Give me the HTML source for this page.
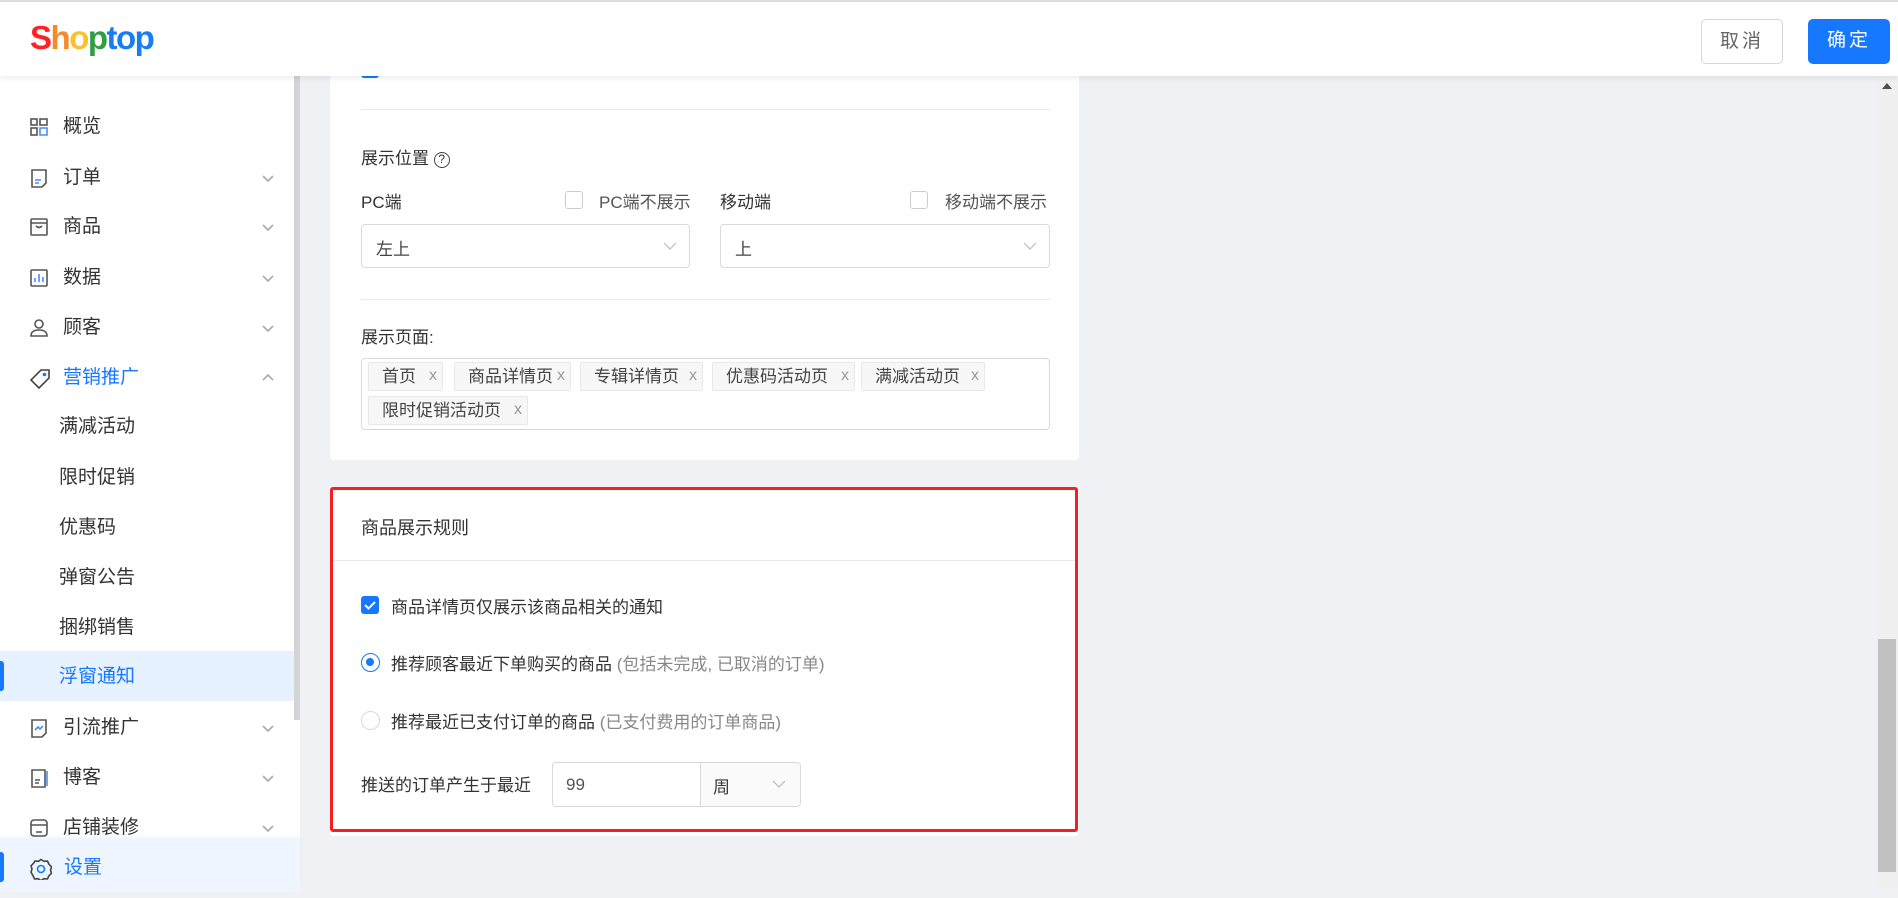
<!DOCTYPE html>
<html><head><meta charset="utf-8"><style>
*{box-sizing:border-box;margin:0;padding:0}
body{width:1898px;height:892px;overflow:hidden;background:#f0f1f5;font-family:"Liberation Sans","Noto Sans CJK SC",sans-serif;color:#333;position:relative}
.abs{position:absolute}
.hdr{left:0;top:0;width:1898px;height:76px;background:#fff;border-top:2px solid #ddd;box-shadow:0 2px 6px rgba(0,0,0,.08);z-index:5}
.logo{left:30px;top:17px;font-size:33px;font-weight:bold;letter-spacing:-1.5px;font-family:"Liberation Sans",sans-serif}
.btn{top:17px;height:45px;width:82px;border-radius:5px;font-size:19px;text-align:center;line-height:43px;letter-spacing:3px}
.side{left:0;top:76px;width:300px;height:816px;background:#fff}
.mi{position:absolute;left:0;width:294px;height:48px;font-size:19px;line-height:48px}
.mi .t{position:absolute;left:63px}
.mi .s{position:absolute;left:59px}
.mi svg.ic{position:absolute;left:30px;top:15px}
.chev{position:absolute;left:261px;top:14px}
.card{background:#fff;border-radius:4px;left:330px;width:749px}
.f{font-size:17px;color:#333}
.line{height:1px;background:#e8e8e8;left:361px;width:689px}
.cb{width:18px;height:18px;border:1px solid #ccc;border-radius:3px;background:#fff}
.sel{height:44px;border:1px solid #d9d9d9;border-radius:4px;background:#fff}
.tag{position:absolute;height:29px;background:#f7f7f7;border:1px solid #e8e8e8;border-radius:2px;font-size:17px;line-height:27px;padding-left:13px;color:#444}
.tag i{font-style:normal;color:#999;font-size:16px;position:absolute;right:5px;top:-1px}
</style></head><body>
<div class="abs hdr">
 <div class="abs logo"><span style="color:#f22">S</span><span style="color:#f58a2a">h</span><span style="color:#fbc02d">o</span><span style="color:#2e9e44">p</span><span style="color:#1a7cf5">top</span></div>
 <div class="abs btn" style="left:1701px;border:1px solid #d6d6d6;color:#666;background:#fff">取消</div>
 <div class="abs btn" style="left:1808px;background:#1677ff;color:#fff">确定</div>
</div>
<div class="abs side">
 <div class="abs" style="left:294px;top:0;width:6px;height:644px;background:#d4d4d4"></div>
</div>
<div class="abs" style="left:0;top:76px;width:300px;height:816px">
 <div class="mi" style="top:27px"><svg class="ic" width="18" height="18" viewBox="0 0 18 18" fill="none" stroke="#555" stroke-width="1.6"><rect x="1" y="1" width="6" height="6"/><rect x="1" y="10" width="6" height="7"/><rect x="10" y="1" width="7" height="6"/><path d="M10 10h7v7h-7z" stroke="#4a8cf7"/></svg><span class="t">概览</span></div>
 <div class="mi" style="top:78px"><svg class="ic" width="18" height="19" viewBox="0 0 18 19" fill="none" stroke="#555" stroke-width="1.6"><path d="M2 1h14v13l-4 4H2z"/><path d="M5 11h6M5 14h4" stroke="#4a8cf7"/></svg><span class="t">订单</span><svg class="chev" width="14" height="20" viewBox="0 0 14 20"><path d="M2 8l5 5 5-5" fill="none" stroke="#aaa" stroke-width="1.6"/></svg></div>
 <div class="mi" style="top:127px"><svg class="ic" width="18" height="18" viewBox="0 0 18 18" fill="none" stroke="#555" stroke-width="1.6"><rect x="1" y="1" width="16" height="16" rx="1"/><path d="M1 5h16M6 8q3 3 6 0" /></svg><span class="t">商品</span><svg class="chev" width="14" height="20" viewBox="0 0 14 20"><path d="M2 8l5 5 5-5" fill="none" stroke="#aaa" stroke-width="1.6"/></svg></div>
 <div class="mi" style="top:178px"><svg class="ic" width="18" height="18" viewBox="0 0 18 18" fill="none" stroke="#555" stroke-width="1.6"><rect x="1" y="1" width="16" height="16" rx="1"/><path d="M5 13V9M9 13V5M13 13V8" stroke="#4a8cf7"/></svg><span class="t">数据</span><svg class="chev" width="14" height="20" viewBox="0 0 14 20"><path d="M2 8l5 5 5-5" fill="none" stroke="#aaa" stroke-width="1.6"/></svg></div>
 <div class="mi" style="top:228px"><svg class="ic" width="18" height="18" viewBox="0 0 18 18" fill="none" stroke="#555" stroke-width="1.6"><circle cx="9" cy="5" r="4"/><path d="M1 17q0-6 8-6t8 6z"/></svg><span class="t">顾客</span><svg class="chev" width="14" height="20" viewBox="0 0 14 20"><path d="M2 8l5 5 5-5" fill="none" stroke="#aaa" stroke-width="1.6"/></svg></div>
 <div class="mi" style="top:278px;color:#1677ff"><svg class="ic" width="20" height="20" viewBox="0 0 20 20" fill="none" stroke="#444" stroke-width="1.6"><path d="M11 1h8v8L9 19 1 11z"/><circle cx="14.5" cy="5.5" r="1" fill="#1677ff" stroke="#1677ff"/></svg><span class="t">营销推广</span><svg class="chev" width="14" height="20" viewBox="0 0 14 20"><path d="M2 12l5-5 5 5" fill="none" stroke="#aaa" stroke-width="1.6"/></svg></div>
 <div class="mi" style="top:327px"><span class="s">满减活动</span></div>
 <div class="mi" style="top:378px"><span class="s">限时促销</span></div>
 <div class="mi" style="top:428px"><span class="s">优惠码</span></div>
 <div class="mi" style="top:478px"><span class="s">弹窗公告</span></div>
 <div class="mi" style="top:528px"><span class="s">捆绑销售</span></div>
 <div class="mi" style="top:575px;height:50px;line-height:52px;background:#e6f2ff;color:#1677ff"><div class="abs" style="left:0;top:10px;width:4px;height:30px;background:#1677ff;border-radius:0 3px 3px 0"></div><span class="s">浮窗通知</span></div>
 <div class="mi" style="top:628px"><svg class="ic" width="18" height="19" viewBox="0 0 18 19" fill="none" stroke="#555" stroke-width="1.6"><path d="M2 1h14v13l-4 4H2z"/><path d="M5 11l3-3 2 2 3-3" stroke="#4a8cf7"/></svg><span class="t">引流推广</span><svg class="chev" width="14" height="20" viewBox="0 0 14 20"><path d="M2 8l5 5 5-5" fill="none" stroke="#aaa" stroke-width="1.6"/></svg></div>
 <div class="mi" style="top:678px"><svg class="ic" width="18" height="19" viewBox="0 0 18 19" fill="none" stroke="#555" stroke-width="1.6"><path d="M2 1h13v17H2z"/><path d="M5 11h5M5 14h4" /><path d="M17 2v15" stroke="#4a8cf7"/></svg><span class="t">博客</span><svg class="chev" width="14" height="20" viewBox="0 0 14 20"><path d="M2 8l5 5 5-5" fill="none" stroke="#aaa" stroke-width="1.6"/></svg></div>
 <div class="mi" style="top:728px"><svg class="ic" width="18" height="18" viewBox="0 0 18 18" fill="none" stroke="#555" stroke-width="1.6"><rect x="1" y="1" width="16" height="16" rx="3"/><path d="M1 6h16M6 13h6" /></svg><span class="t">店铺装修</span><svg class="chev" width="14" height="20" viewBox="0 0 14 20"><path d="M2 8l5 5 5-5" fill="none" stroke="#aaa" stroke-width="1.6"/></svg></div>
 <div class="abs" style="left:0;top:762px;width:300px;height:54px;background:#eef5ff;box-shadow:0 -2px 4px rgba(0,0,0,.04);font-size:19px;line-height:60px;color:#1677ff">
  <div class="abs" style="left:0;top:14px;width:4px;height:30px;background:#1677ff;border-radius:0 3px 3px 0"></div>
  <svg class="abs" style="left:30px;top:20px" width="22" height="22" viewBox="0 0 22 22" fill="none" stroke="#444" stroke-width="1.6"><path d="M11 1.5l3 1.8 3.5-.2 1.5 3.2 2.5 2.5-1 3.2 1 3.2-2.5 2.5-1.5 3.2-3.5-.2-3 1.8-3-1.8-3.5.2-1.5-3.2L1 14.2l1-3.2-1-3.2 2.5-2.5L5 3.1l3.5.2z"/><circle cx="11" cy="11" r="3.5" stroke="#1677ff"/></svg>
  <span class="abs" style="left:64px">设置</span>
 </div>
</div>
<!-- card 1 -->
<div class="abs card" style="top:40px;height:420px"></div>
<div class="abs" style="left:361px;top:64px;width:18px;height:14px;background:#1677ff;border-radius:3px"></div>
<div class="abs line" style="top:109px"></div>
<div class="abs f" style="left:361px;top:144px">展示位置 <span style="display:inline-block;width:16px;height:16px;border:1.5px solid #444;border-radius:50%;font-size:12px;line-height:13px;text-align:center;vertical-align:1px">?</span></div>
<div class="abs f" style="left:361px;top:188px">PC端</div>
<div class="abs cb" style="left:565px;top:191px"></div>
<div class="abs f" style="left:599px;top:188px;color:#555">PC端不展示</div>
<div class="abs f" style="left:720px;top:188px">移动端</div>
<div class="abs cb" style="left:910px;top:191px"></div>
<div class="abs f" style="left:945px;top:188px;color:#555">移动端不展示</div>
<div class="abs sel" style="left:361px;top:224px;width:329px"><span class="abs f" style="left:14px;top:10px;color:#444">左上</span><svg class="abs" style="right:12px;top:15px" width="14" height="12"><path d="M1 3l6 6 6-6" fill="none" stroke="#bbb" stroke-width="1.2"/></svg></div>
<div class="abs sel" style="left:720px;top:224px;width:330px"><span class="abs f" style="left:14px;top:10px;color:#444">上</span><svg class="abs" style="right:12px;top:15px" width="14" height="12"><path d="M1 3l6 6 6-6" fill="none" stroke="#bbb" stroke-width="1.2"/></svg></div>
<div class="abs line" style="top:299px"></div>
<div class="abs f" style="left:361px;top:323px">展示页面:</div>
<div class="abs" style="left:361px;top:358px;width:689px;height:72px;border:1px solid #d9d9d9;border-radius:4px"></div>
<div class="tag" style="left:368px;top:362px;width:75px">首页<i>x</i></div>
<div class="tag" style="left:454px;top:362px;width:117px">商品详情页<i>x</i></div>
<div class="tag" style="left:580px;top:362px;width:123px">专辑详情页<i>x</i></div>
<div class="tag" style="left:712px;top:362px;width:143px">优惠码活动页<i>x</i></div>
<div class="tag" style="left:861px;top:362px;width:124px">满减活动页<i>x</i></div>
<div class="tag" style="left:368px;top:396px;width:160px">限时促销活动页<i>x</i></div>
<!-- card 2 -->
<div class="abs card" style="top:488px;height:348px"></div>
<div class="abs" style="left:330px;top:487px;width:748px;height:345px;border:3px solid #f41f1f;border-radius:3px"></div>
<div class="abs f" style="left:361px;top:514px;font-size:18px">商品展示规则</div>
<div class="abs" style="left:333px;top:560px;width:742px;height:1px;background:#e8e8e8"></div>
<div class="abs" style="left:361px;top:596px;width:18px;height:18px;background:#1677ff;border-radius:3px"><svg width="18" height="18"><path d="M4 9l3.5 3.5L14 6" fill="none" stroke="#fff" stroke-width="2"/></svg></div>
<div class="abs f" style="left:391px;top:593px">商品详情页仅展示该商品相关的通知</div>
<div class="abs" style="left:361px;top:653px;width:19px;height:19px;border:1.5px solid #1677ff;border-radius:50%"><div class="abs" style="left:4px;top:4px;width:8px;height:8px;background:#1677ff;border-radius:50%"></div></div>
<div class="abs f" style="left:391px;top:650px">推荐顾客最近下单购买的商品 <span style="color:#888">(包括未完成, 已取消的订单)</span></div>
<div class="abs" style="left:361px;top:711px;width:19px;height:19px;border:1px solid #d9d9d9;border-radius:50%"></div>
<div class="abs f" style="left:391px;top:708px">推荐最近已支付订单的商品 <span style="color:#888">(已支付费用的订单商品)</span></div>
<div class="abs f" style="left:361px;top:771px">推送的订单产生于最近</div>
<div class="abs" style="left:552px;top:762px;width:249px;height:45px;border:1px solid #d9d9d9;border-radius:4px;background:#fff;overflow:hidden">
 <span class="abs f" style="left:13px;top:12px;color:#555">99</span>
 <div class="abs" style="left:147px;top:0;width:102px;height:45px;background:#fafafa;border-left:1px solid #d9d9d9"><span class="abs f" style="left:12px;top:10px">周</span><svg class="abs" style="left:71px;top:15px" width="14" height="12"><path d="M1 3l6 6 6-6" fill="none" stroke="#bbb" stroke-width="1.2"/></svg></div>
</div>
<!-- right scrollbar -->
<div class="abs" style="left:1876px;top:76px;width:22px;height:816px;background:#f0f0f0"></div>
<svg class="abs" style="left:1882px;top:82px" width="10" height="8"><path d="M0 7L5 1l5 6z" fill="#505050"/></svg>
<div class="abs" style="left:1878px;top:639px;width:18px;height:233px;background:#c1c1c1"></div>
</body></html>
